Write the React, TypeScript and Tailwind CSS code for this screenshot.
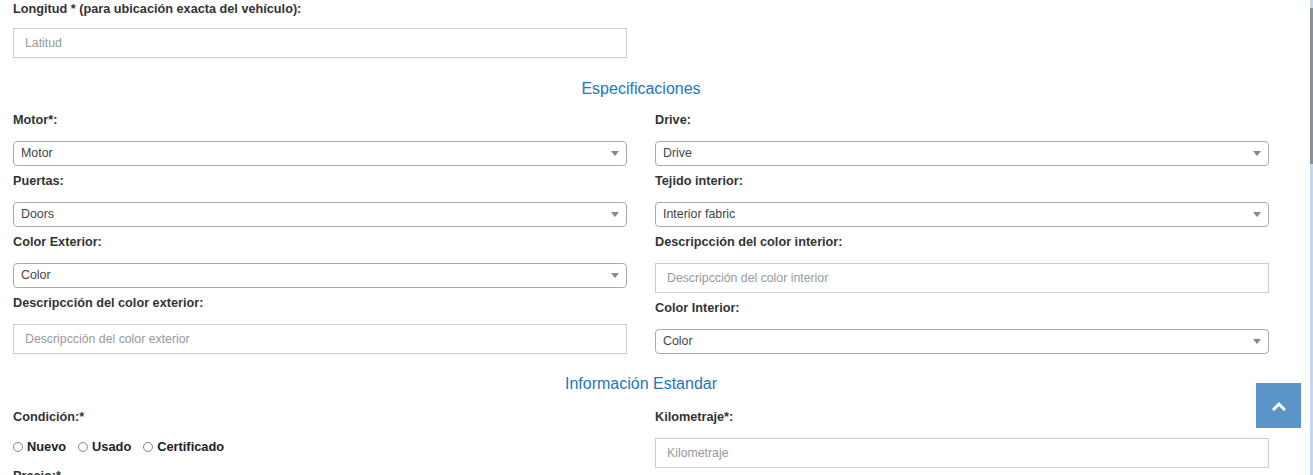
import React from "react";

const font = { fontFamily: '"Liberation Sans", Arial, sans-serif' };

function Label({ children }: { children: React.ReactNode }) {
  return (
    <div className="pt-[5px] pb-[11px] text-[12.7px] leading-[20px] font-bold text-[#333]">
      {children}
    </div>
  );
}

function Select({ value }: { value: string }) {
  return (
    <div className="h-[25px] w-full border border-[#aaa] rounded-[4px] bg-white flex items-center justify-between pl-[7px] pr-[7px]">
      <span className="text-[12.4px] text-[#444] leading-[23px]">{value}</span>
      <span className="w-0 h-0 border-l-[4px] border-r-[4px] border-t-[5px] border-l-transparent border-r-transparent border-t-[#888]" />
    </div>
  );
}

function Input({ placeholder }: { placeholder: string }) {
  return (
    <div className="h-[30px] w-full border border-[#ccc] bg-white flex items-center pl-[11px]">
      <span className="text-[12.3px] text-[#999]">{placeholder}</span>
    </div>
  );
}

function Radio({ label }: { label: string }) {
  return (
    <span className="inline-flex items-center mr-[12px]">
      <span className="w-[10px] h-[10px] rounded-full border border-[#888] bg-white mr-[4px]" />
      <span className="text-[12.8px] font-bold text-[#222]">{label}</span>
    </span>
  );
}

function Heading({ children }: { children: React.ReactNode }) {
  return (
    <div className="text-center text-[16px] leading-[20px] text-[#2377b6]">{children}</div>
  );
}

export default function App() {
  return (
    <div className="h-[475px] w-[1313px] overflow-hidden bg-white relative" style={font}>
      <div className="pl-[13px] w-[1269px]">
        <div className="text-[12.7px] leading-[18px] font-bold text-[#333]">
          Longitud * (para ubicación exacta del vehículo):
        </div>
        <div className="mt-[10px] w-[614px]">
          <Input placeholder="Latitud" />
        </div>

        <div className="mt-[21px]">
          <Heading>Especificaciones</Heading>
        </div>

        <div className="mt-[6px] flex gap-[28px]">
          <div className="w-[614px] flex flex-col">
            <Label>Motor*:</Label>
            <Select value="Motor" />
            <Label>Puertas:</Label>
            <Select value="Doors" />
            <Label>Color Exterior:</Label>
            <Select value="Color" />
            <Label>Descripcción del color exterior:</Label>
            <Input placeholder="Descripcción del color exterior" />
          </div>
          <div className="w-[614px] flex flex-col">
            <Label>Drive:</Label>
            <Select value="Drive" />
            <Label>Tejido interior:</Label>
            <Select value="Interior fabric" />
            <Label>Descripcción del color interior:</Label>
            <Input placeholder="Descripcción del color interior" />
            <Label>Color Interior:</Label>
            <Select value="Color" />
          </div>
        </div>

        <div className="mt-[20px]">
          <Heading>Información Estandar</Heading>
        </div>

        <div className="mt-[8px] flex gap-[28px]">
          <div className="w-[614px] flex flex-col">
            <Label>Condición:*</Label>
            <div className="flex items-center leading-[18px]">
              <Radio label="Nuevo" />
              <Radio label="Usado" />
              <Radio label="Certificado" />
            </div>
            <div className="pt-[10px] text-[12.7px] leading-[20px] font-bold text-[#333]">Precio:*</div>
          </div>
          <div className="w-[614px] flex flex-col">
            <Label>Kilometraje*:</Label>
            <Input placeholder="Kilometraje" />
          </div>
        </div>
      </div>

      {/* scroll to top button */}
      <div className="fixed left-[1256px] top-[383px] w-[45px] h-[45px] bg-[#5b94c6] flex items-center justify-center">
        <svg width="14" height="10" viewBox="0 0 14 10">
          <polyline points="2,8 7,3 12,8" fill="none" stroke="#fff" strokeWidth="3" strokeLinecap="square" />
        </svg>
      </div>

      {/* custom scrollbar */}
      <div className="fixed left-[1310px] top-0 w-[3px] h-[475px] bg-[#c5d9ee]">
        <div className="mt-[8px] h-[156px] w-full bg-[#87929b]" />
      </div>
    </div>
  );
}
